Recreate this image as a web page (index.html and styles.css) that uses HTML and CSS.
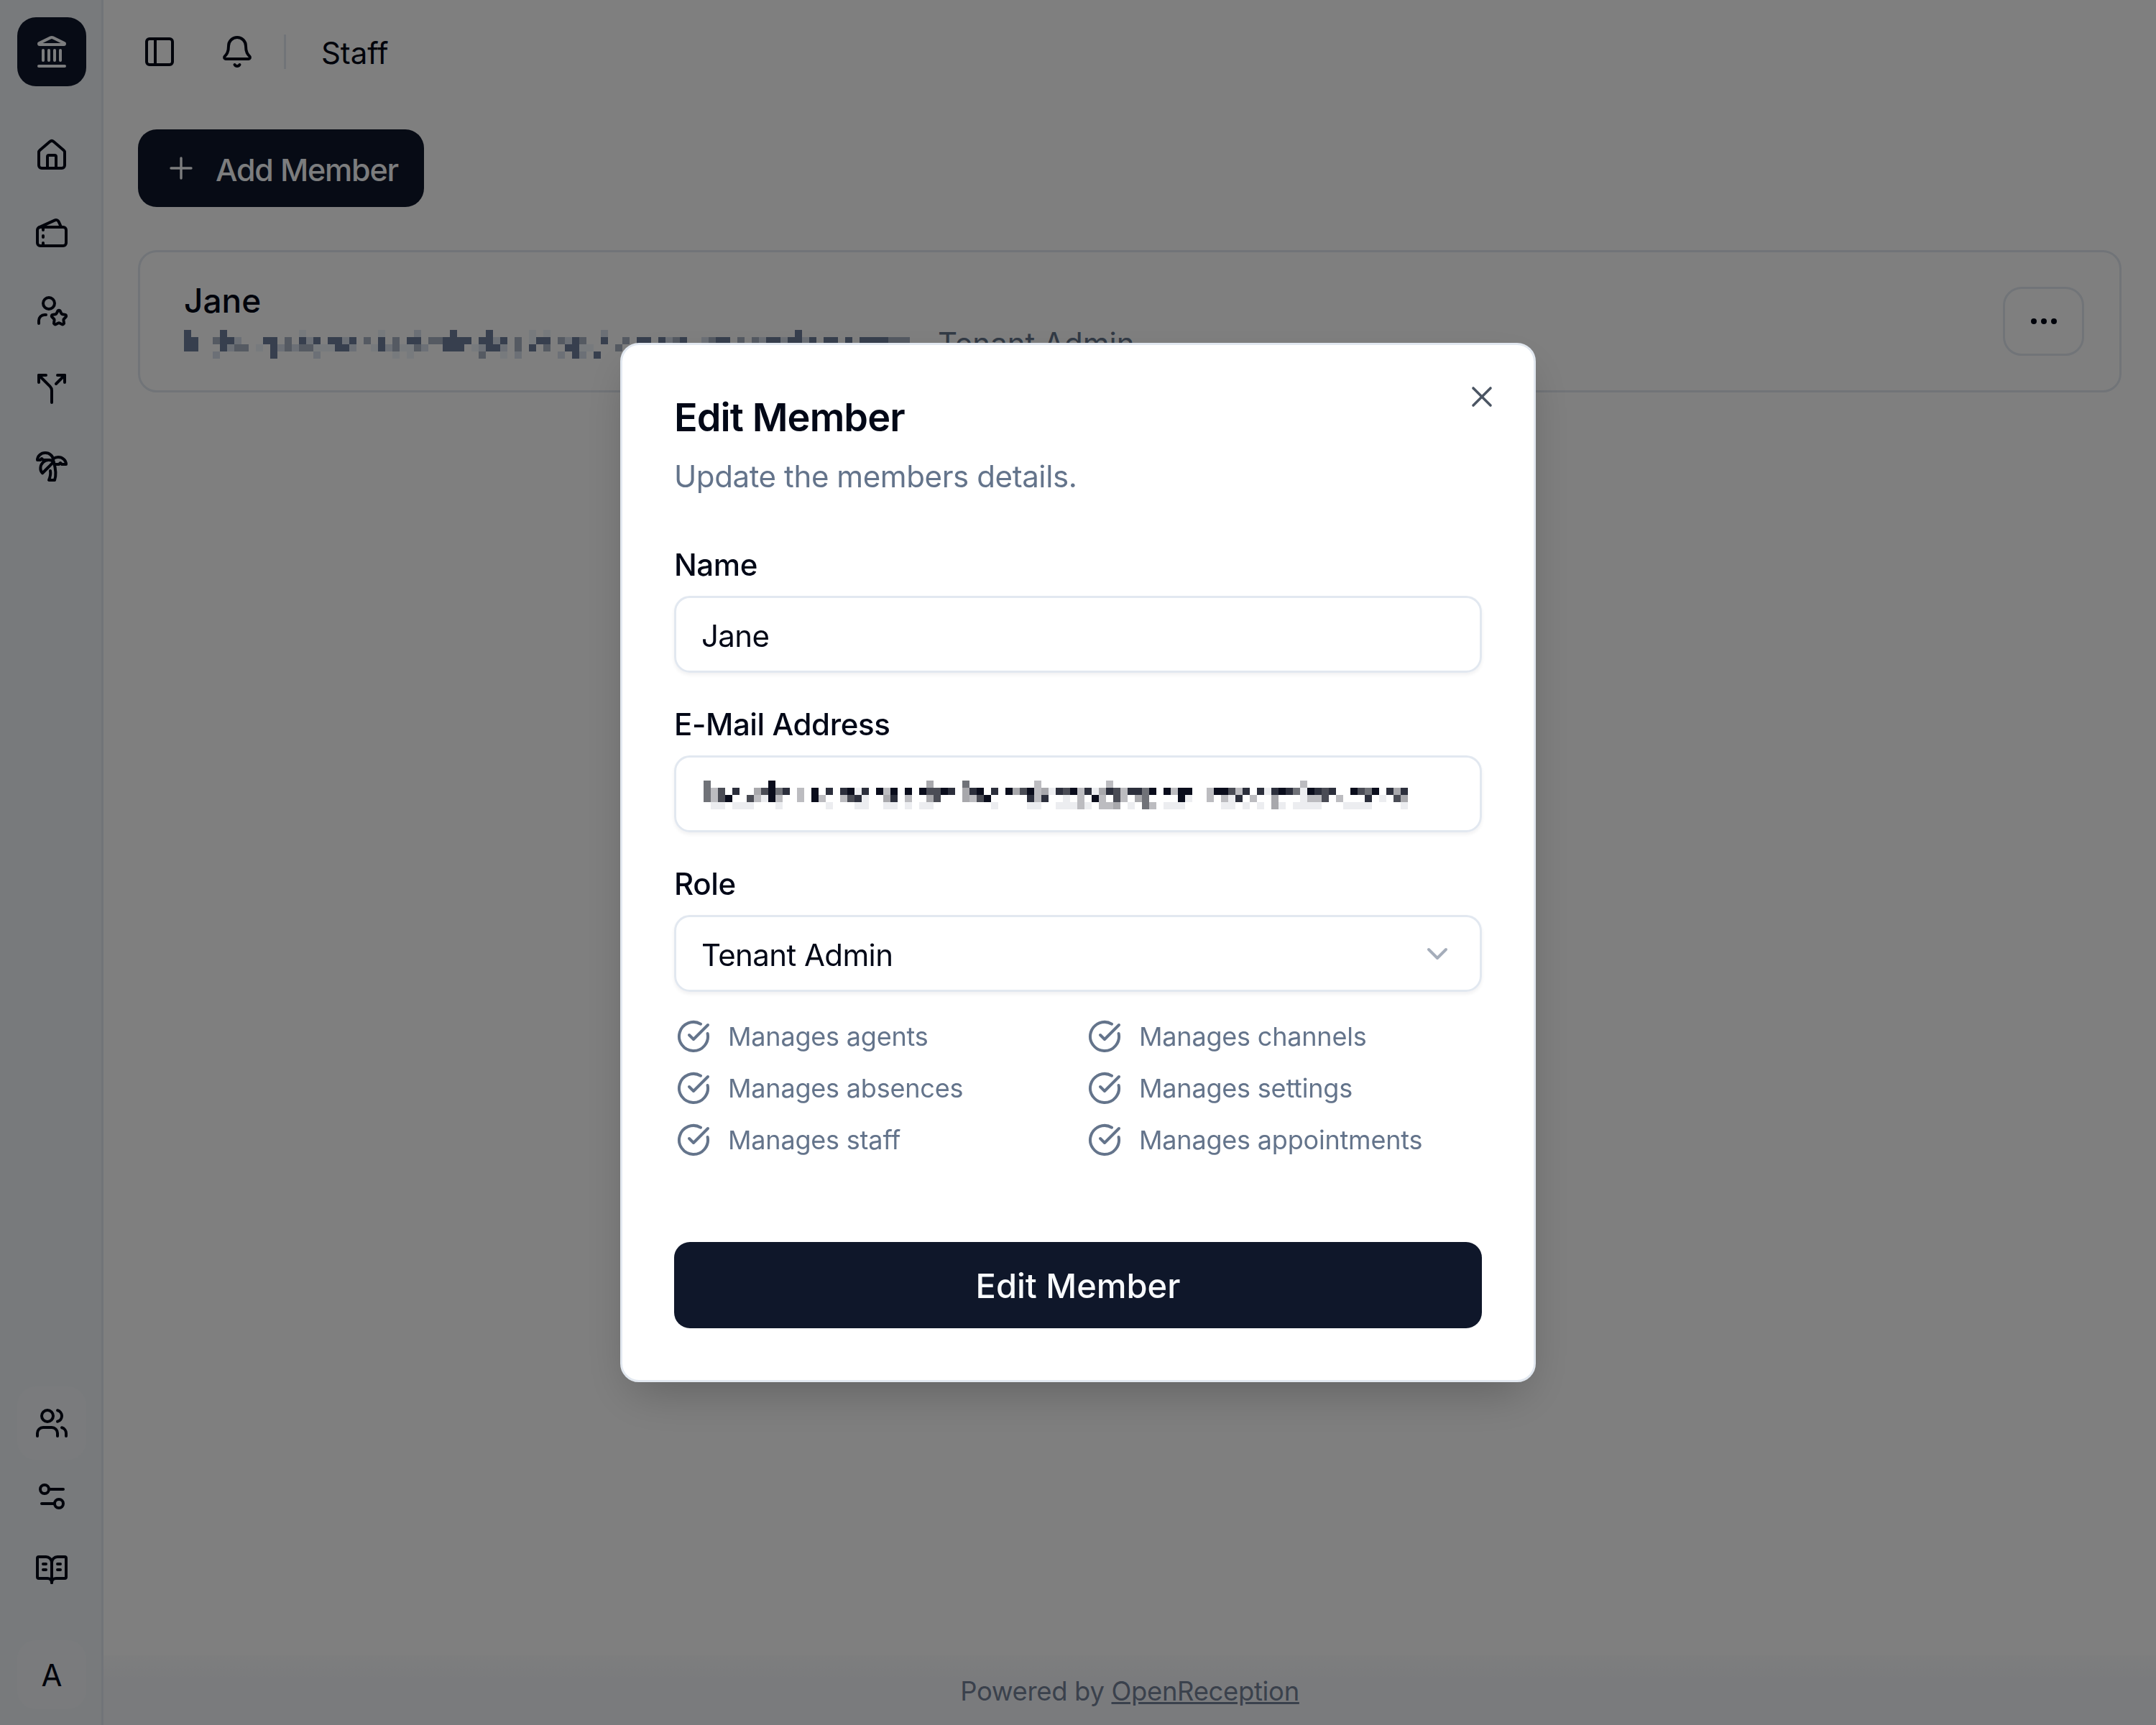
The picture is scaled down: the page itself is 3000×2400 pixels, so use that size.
FILE: index.html
```html
<!DOCTYPE html>
<html lang="en">
<head>
  <meta charset="UTF-8">
  <meta name="viewport" content="width=device-width, initial-scale=1.0">
  <title>Staff</title>
  <link rel="stylesheet" href="styles.css">
</head>
<body>
  <div class="app">
    <aside class="sidebar">
      <div class="logo">
        <svg class="icon" viewBox="0 0 24 24"><path d="M10 18v-7"/><path d="M11.12 2.198a2 2 0 0 1 1.76.006l7.866 3.847c.476.233.31.949-.22.949H3.474c-.53 0-.695-.716-.22-.949z"/><path d="M14 18v-7"/><path d="M18 18v-7"/><path d="M3 22h18"/><path d="M6 18v-7"/></svg>
      </div>
      <nav class="nav">
        <div class="nav-item"><svg class="icon" viewBox="0 0 24 24"><path d="M15 21v-8a1 1 0 0 0-1-1h-4a1 1 0 0 0-1 1v8"/><path d="M3 10a2 2 0 0 1 .709-1.528l7-5.999a2 2 0 0 1 2.582 0l7 5.999A2 2 0 0 1 21 10v9a2 2 0 0 1-2 2H5a2 2 0 0 1-2-2z"/></svg></div>
        <div class="nav-item"><svg class="icon" viewBox="0 0 24 24"><path d="m3.173 8.18 11-5a2 2 0 0 1 2.647.993L18.56 8"/><path d="M6 10V8"/><path d="M6 14v1"/><path d="M6 19v2"/><rect x="2" y="8" width="20" height="13" rx="2"/></svg></div>
        <div class="nav-item"><svg class="icon" viewBox="0 0 24 24"><path d="M16.051 12.616a1 1 0 0 1 1.909.024l.737 1.452a1 1 0 0 0 .737.535l1.634.256a1 1 0 0 1 .588 1.806l-1.172 1.168a1 1 0 0 0-.282.866l.259 1.613a1 1 0 0 1-1.541 1.134l-1.465-.75a1 1 0 0 0-.912 0l-1.465.75a1 1 0 0 1-1.539-1.133l.258-1.613a1 1 0 0 0-.282-.866l-1.156-1.153a1 1 0 0 1 .572-1.822l1.633-.256a1 1 0 0 0 .737-.535z"/><path d="M8 15H7a4 4 0 0 0-4 4v2"/><circle cx="10" cy="7" r="4"/></svg></div>
        <div class="nav-item"><svg class="icon" viewBox="0 0 24 24"><path d="M16 3h5v5"/><path d="M8 3H3v5"/><path d="M12 22v-8.3a4 4 0 0 0-1.172-2.872L3 3"/><path d="m15 9 6-6"/></svg></div>
        <div class="nav-item"><svg class="icon" viewBox="0 0 24 24"><path d="M13 8c0-2.76-2.46-5-5.5-5S2 5.24 2 8h2l1-1 1 1h4"/><path d="M13 7.14A5.82 5.82 0 0 1 16.5 6c3.04 0 5.5 2.24 5.5 5h-3l-1-1-1 1h-3"/><path d="M5.89 9.71c-2.15 2.15-2.3 5.47-.35 7.43l4.24-4.25.7-.7.71-.71 2.12-2.12c-1.95-1.96-5.27-1.8-7.42.35"/><path d="M11 15.5c.5 2.5-.17 4.5-1 6.5h4c2-5.5-.5-12-1-14"/></svg></div>
      </nav>
      <nav class="nav-bottom">
        <div class="nav-item small active"><svg class="icon" viewBox="0 0 24 24"><path d="M16 21v-2a4 4 0 0 0-4-4H6a4 4 0 0 0-4 4v2"/><circle cx="9" cy="7" r="4"/><path d="M22 21v-2a4 4 0 0 0-3-3.87"/><path d="M16 3.13a4 4 0 0 1 0 7.75"/></svg></div>
        <div class="nav-item small"><svg class="icon" viewBox="0 0 24 24"><path d="M20 7h-9"/><path d="M14 17H5"/><circle cx="17" cy="17" r="3"/><circle cx="7" cy="7" r="3"/></svg></div>
        <div class="nav-item small"><svg class="icon" viewBox="0 0 24 24"><path d="M12 7v14"/><path d="M16 12h2"/><path d="M16 8h2"/><path d="M3 18a1 1 0 0 1-1-1V4a1 1 0 0 1 1-1h5a4 4 0 0 1 4 4 4 4 0 0 1 4-4h5a1 1 0 0 1 1 1v13a1 1 0 0 1-1 1h-6a3 3 0 0 0-3 3 3 3 0 0 0-3-3z"/><path d="M6 12h2"/><path d="M6 8h2"/></svg></div>
        <div class="avatar">A</div>
      </nav>
    </aside>

    <div class="main">
      <header class="topbar">
        <svg class="icon" viewBox="0 0 24 24"><rect x="3" y="3" width="18" height="18" rx="2"/><path d="M9 3v18"/></svg>
        <svg class="icon bell" viewBox="0 0 24 24"><path d="M10.268 21a2 2 0 0 0 3.464 0"/><path d="M3.262 15.326A1 1 0 0 0 4 17h16a1 1 0 0 0 .74-1.673C19.41 13.956 18 12.499 18 8A6 6 0 0 0 6 8c0 4.499-1.411 5.956-2.738 7.326"/></svg>
        <div class="divider"></div>
        <div class="page-title">Staff</div>
      </header>

      <div class="content">
        <button class="add-btn">
          <svg class="icon" viewBox="0 0 24 24"><path d="M5 12h14"/><path d="M12 5v14"/></svg>
          <span>Add Member</span>
        </button>

        <div class="card">
          <div class="member">
            <div class="member-name">Jane</div>
            <div class="member-sub">
              <svg class="mosaic" viewBox="0 0 101 4" width="1010" height="40">
                <path stroke="#eef4fa" d="M16 .5h1M27 .5h1M48 .5h1M50 .5h1M48 1.5h1M10 2.5h1M18 2.5h3M26 2.5h1M30 2.5h2M40 2.5h1M55 2.5h2M29 3.5h1M31 3.5h1M44 3.5h1"/>
                <path stroke="#d8e0ec" d="M32 .5h1M58 .5h1M7 1.5h1M17 1.5h1M22 1.5h1M43 1.5h1M53 1.5h1M67 1.5h1M72 1.5h1M80 1.5h1M83 1.5h1M86 1.5h1M6 2.5h1M13 2.5h1M15 2.5h1M23 2.5h1M28 2.5h1M33 2.5h1M41 2.5h1M44 2.5h1M4 3.5h1M18 3.5h1M46 3.5h1M52 3.5h1M55 3.5h1"/>
                <path stroke="#aab4c4" d="M4 1.5h1M14 1.5h1M25 1.5h1M29 1.5h1M34 1.5h2M46 1.5h1M52 1.5h1M55 1.5h1M61 1.5h1M68 1.5h1M73 1.5h1M77 1.5h1M79 1.5h1M98 1.5h3M7 2.5h2M14 2.5h1M16 2.5h2M29 2.5h1M32 2.5h1M46 2.5h1M50 2.5h1M60 2.5h1M41 3.5h1"/>
                <path stroke="#6e7e9c" d="M0 .5h1M5 .5h1M37 .5h1M42 .5h1M85 .5h1M0 1.5h2M5 1.5h2M11 1.5h2M16 1.5h1M18 1.5h1M20 1.5h2M23 1.5h1M27 1.5h1M31 1.5h2M36 1.5h4M41 1.5h2M44 1.5h1M49 1.5h2M54 1.5h1M58 1.5h1M63 1.5h2M66 1.5h1M69 1.5h1M74 1.5h2M81 1.5h2M84 1.5h2M87 1.5h1M89 1.5h2M92 1.5h1M94 1.5h4M0 2.5h2M5 2.5h1M12 2.5h1M21 2.5h2M27 2.5h1M36 2.5h3M42 2.5h2M48 2.5h1M53 2.5h2M12 3.5h1M54 3.5h1M57 3.5h1"/>
              </svg>
              <span class="member-role">Tenant Admin</span>
            </div>
          </div>
          <button class="more-btn">
            <svg class="icon" viewBox="0 0 24 24"><circle cx="12" cy="12" r="1"/><circle cx="19" cy="12" r="1"/><circle cx="5" cy="12" r="1"/></svg>
          </button>
        </div>
      </div>

      <footer class="footer">Powered by&nbsp;<a href="#">OpenReception</a></footer>
    </div>
  </div>

  <div class="overlay">
    <div class="modal">
      <svg class="icon close" viewBox="0 0 24 24"><path d="M18 6 6 18"/><path d="m6 6 12 12"/></svg>
      <h2 class="modal-title">Edit Member</h2>
      <p class="modal-desc">Update the members details.</p>

      <div class="field">
        <label>Name</label>
        <div class="input">Jane</div>
      </div>
      <div class="field">
        <label>E-Mail Address</label>
        <div class="input">
          <svg class="mosaic input-mosaic" viewBox="0 0 98 4" width="980" height="40">
            <path stroke="#ecedf0" d="M21 1.5h1M48 1.5h1M54 1.5h1M78 1.5h1M83 1.5h1M8 2.5h1M22 2.5h1M50 2.5h1M67 2.5h1M73 2.5h1M83 2.5h1M94 2.5h1M1 3.5h2M4 3.5h1M5 3.5h2M10 3.5h1M17 3.5h1M21 3.5h2M25 3.5h2M28 3.5h1M30 3.5h2M40 3.5h1M45 3.5h2M49 3.5h3M53 3.5h1M59 3.5h1M64 3.5h3M72 3.5h2M75 3.5h1M77 3.5h1M80 3.5h1M82 3.5h4M89 3.5h4M97 3.5h1"/>
            <path stroke="#bcbcc0" d="M46 .5h1M56 .5h1M83 .5h1M1 1.5h1M13 1.5h1M25 1.5h1M46 1.5h1M52 1.5h1M58 1.5h1M65 1.5h1M70 1.5h1M74 1.5h1M1 2.5h1M7 2.5h1M10 2.5h1M13 2.5h1M16 2.5h1M19 2.5h1M28 2.5h1M37 2.5h1M46 2.5h1M52 2.5h1M55 2.5h1M58 2.5h1M70 2.5h1M72 2.5h1M76 2.5h1M84 2.5h2M88 2.5h1M52 3.5h1M55 3.5h2M62 3.5h1"/>
            <path stroke="#a8a8ac" d="M31 .5h1M7 1.5h1M36 1.5h1M43 1.5h1M47 1.5h1M55 1.5h1M96 1.5h1M25 2.5h1M31 2.5h1M36 2.5h1M60 2.5h1M79 2.5h1M97 2.5h1M57 3.5h1M79 3.5h1"/>
            <path stroke="#707278" d="M0 .5h1M36 .5h1M0 1.5h1M10 1.5h1M61 1.5h1M82 1.5h1M92 1.5h1M0 2.5h1M61 2.5h1M61 3.5h1"/>
            <path stroke="#4a4c55" d="M2 1.5h1M8 1.5h1M31 1.5h2M44 1.5h1M50 1.5h1M57 1.5h1M73 1.5h1M86 1.5h1M91 1.5h1M2 2.5h1M6 2.5h1M20 2.5h1M32 2.5h1M38 2.5h1M57 2.5h1M86 2.5h1M96 2.5h1"/>
            <path stroke="#2c2f3c" d="M4 1.5h1M11 1.5h1M17 1.5h1M19 1.5h1M22 1.5h1M34 1.5h1M37 1.5h1M40 1.5h1M49 1.5h1M53 1.5h1M56 1.5h1M59 1.5h2M75 1.5h1M77 1.5h1M79 1.5h1M81 1.5h1M85 1.5h1M87 1.5h1M95 1.5h1M97 1.5h1M21 2.5h1M26 2.5h1M45 2.5h1M47 2.5h1M74 2.5h1M92 2.5h1"/>
            <path stroke="#0a0d1c" d="M9 .5h1M9 1.5h1M15 1.5h1M20 1.5h1M24 1.5h1M26 1.5h1M28 1.5h1M30 1.5h1M33 1.5h1M38 1.5h1M42 1.5h1M45 1.5h1M51 1.5h1M62 1.5h1M64 1.5h1M66 1.5h2M71 1.5h2M80 1.5h1M84 1.5h1M90 1.5h1M93 1.5h1M3 2.5h1M9 2.5h1M15 2.5h1M39 2.5h1M54 2.5h1M66 2.5h1"/>
          </svg>
        </div>
      </div>
      <div class="field">
        <label>Role</label>
        <div class="input select">
          Tenant Admin
          <svg class="icon chevron" viewBox="0 0 24 24"><path d="m6 9 6 6 6-6"/></svg>
        </div>
      </div>

      <div class="perms">
        <div class="perm"><svg class="icon" viewBox="0 0 24 24"><path d="M21.801 10A10 10 0 1 1 17 3.335"/><path d="m9 11 3 3L22 4"/></svg>Manages agents</div>
        <div class="perm"><svg class="icon" viewBox="0 0 24 24"><path d="M21.801 10A10 10 0 1 1 17 3.335"/><path d="m9 11 3 3L22 4"/></svg>Manages channels</div>
        <div class="perm"><svg class="icon" viewBox="0 0 24 24"><path d="M21.801 10A10 10 0 1 1 17 3.335"/><path d="m9 11 3 3L22 4"/></svg>Manages absences</div>
        <div class="perm"><svg class="icon" viewBox="0 0 24 24"><path d="M21.801 10A10 10 0 1 1 17 3.335"/><path d="m9 11 3 3L22 4"/></svg>Manages settings</div>
        <div class="perm"><svg class="icon" viewBox="0 0 24 24"><path d="M21.801 10A10 10 0 1 1 17 3.335"/><path d="m9 11 3 3L22 4"/></svg>Manages staff</div>
        <div class="perm"><svg class="icon" viewBox="0 0 24 24"><path d="M21.801 10A10 10 0 1 1 17 3.335"/><path d="m9 11 3 3L22 4"/></svg>Manages appointments</div>
      </div>

      <button class="submit-btn">Edit Member</button>
    </div>
  </div>
</body>
</html>
```

FILE: styles.css
```css
* {
  box-sizing: border-box;
}

html, body {
  margin: 0;
  height: 100%;
}

body {
  font-family: "Inter", "Liberation Sans", sans-serif;
  font-size: 42px;
  color: #020817;
  background-color: #ffffff;
}

.app {
  display: flex;
  height: 100vh;
}

.icon {
  width: 48px;
  height: 48px;
  flex-shrink: 0;
  fill: none;
  stroke: currentColor;
  stroke-width: 2;
  stroke-linecap: round;
  stroke-linejoin: round;
}

/* sidebar */
.sidebar {
  width: 144px;
  flex-shrink: 0;
  display: flex;
  flex-direction: column;
  align-items: center;
  padding-top: 24px;
  padding-left: 3px;
  background-color: #f1f5f9;
  border-right: 3px solid #e2e8f0;
}

.logo {
  width: 96px;
  height: 96px;
  display: flex;
  justify-content: center;
  align-items: center;
  border-radius: 26px;
  background-color: #0f172a;
  color: #f8fafc;
}

.nav {
  margin-top: 42px;
  display: flex;
  flex-direction: column;
}

.nav-item {
  width: 96px;
  height: 108px;
  display: flex;
  justify-content: center;
  align-items: center;
  border-radius: 26px;
}

.nav-bottom {
  margin-top: auto;
  display: flex;
  flex-direction: column;
  align-items: center;
  padding-bottom: 22px;
}

.nav-item.small {
  height: 102px;
}

.nav-item.active {
  background-color: #f4f7fa;
}

.avatar {
  width: 96px;
  height: 96px;
  margin-top: 47px;
  display: flex;
  justify-content: center;
  align-items: center;
  border-radius: 26px;
  background-color: #f4f7fa;
  font-size: 42px;
}

/* main column */
.main {
  flex: 1;
  display: flex;
  flex-direction: column;
  min-width: 0;
}

.topbar {
  height: 144px;
  padding-left: 54px;
  display: flex;
  align-items: center;
}

.bell {
  margin-left: 60px;
}

.divider {
  width: 3px;
  height: 48px;
  margin-left: 41px;
  background-color: #e2e8f0;
}

.page-title {
  margin-left: 49px;
  padding-top: 3px;
  font-size: 42px;
  letter-spacing: -0.1px;
}

.content {
  flex: 1;
  padding: 36px 48px 0;
}

.add-btn {
  width: 398px;
  height: 108px;
  padding: 0 0 0 36px;
  display: flex;
  align-items: center;
  gap: 24px;
  border: none;
  border-radius: 26px;
  background-color: #0f172a;
  color: #f8fafc;
  font-family: inherit;
  font-size: 43px;
  font-weight: 500;
  letter-spacing: -1.2px;
}

.add-btn .icon {
  stroke-width: 1.7;
}

.add-btn span {
  padding-top: 3px;
}

.card {
  height: 198px;
  margin-top: 60px;
  padding: 0 49px 0 61px;
  display: flex;
  justify-content: space-between;
  align-items: center;
  border: 3px solid #e2e8f0;
  border-radius: 26px;
}

.member {
  padding-bottom: 5px;
}

.member-name {
  font-size: 46px;
  font-weight: 500;
  line-height: 56px;
}

.member-sub {
  margin-top: 13px;
  height: 40px;
  display: flex;
  align-items: center;
}

.mosaic {
  display: block;
  flex-shrink: 0;
  stroke-width: 1;
  shape-rendering: crispEdges;
  fill: none;
}

.member-role {
  margin-left: 39px;
  margin-bottom: 3px;
  color: #64748b;
  line-height: 40px;
}

.more-btn {
  width: 113px;
  height: 96px;
  display: flex;
  justify-content: center;
  align-items: center;
  padding: 0;
  background: none;
  border: 3px solid #e2e8f0;
  border-radius: 26px;
  color: #020817;
}

.footer {
  height: 97px;
  display: flex;
  justify-content: center;
  align-items: center;
  padding-top: 2px;
  background: linear-gradient(#fbfcfd, #f4f6fa 40%);
  color: #748299;
  font-size: 36.4px;
  letter-spacing: -0.3px;
}

.footer a {
  color: inherit;
}

/* dialog */
.overlay {
  position: fixed;
  top: 0;
  left: 0;
  width: 100%;
  height: 100%;
  display: flex;
  justify-content: center;
  align-items: center;
  background-color: rgba(0, 0, 0, 0.5);
}

.modal {
  position: relative;
  width: 1274px;
  height: 1446px;
  padding: 69px 72px 0;
  background-color: #ffffff;
  border: 3px solid #e2e8f0;
  border-radius: 26px;
  box-shadow: 0 26px 65px -16px rgba(0, 0, 0, 0.25);
}

.close {
  position: absolute;
  top: 48px;
  right: 48px;
  color: #4b5563;
  stroke-width: 1.8;
}

.modal-title {
  margin: 0;
  font-size: 54px;
  font-weight: 600;
  line-height: 64px;
  letter-spacing: -0.9px;
}

.modal-desc {
  margin: 20px 0 0;
  font-size: 42px;
  line-height: 60px;
  letter-spacing: -0.4px;
  color: #64748b;
}

.field {
  margin-top: 47px;
}

.modal-desc + .field {
  margin-top: 68px;
}

.field label {
  display: block;
  font-size: 42px;
  font-weight: 500;
  line-height: 50px;
  letter-spacing: -0.4px;
}

.input {
  height: 107px;
  margin-top: 18px;
  padding: 3px 35px 0;
  display: flex;
  align-items: center;
  border: 3px solid #e2e8f0;
  border-radius: 22px;
  box-shadow: 0 3px 5px rgba(15, 23, 42, 0.06);
  font-size: 42px;
  letter-spacing: -0.6px;
}

.input-mosaic {
  margin-left: 3px;
}

.select {
  justify-content: space-between;
}

.chevron {
  margin-right: 0;
  margin-bottom: 3px;
  color: #a5adba;
}

.perms {
  margin-top: 26px;
  display: grid;
  grid-template-columns: 572px 1fr;
  grid-auto-rows: 72px;
}

.perm {
  padding-left: 3px;
  display: flex;
  align-items: center;
  gap: 24px;
  color: #64748b;
  font-size: 36px;
  letter-spacing: -0.2px;
}

.submit-btn {
  width: 100%;
  height: 120px;
  margin-top: 106px;
  border: none;
  border-radius: 22px;
  background-color: #0f172a;
  color: #f8fafc;
  font-family: inherit;
  font-size: 47px;
  font-weight: 500;
}
```
